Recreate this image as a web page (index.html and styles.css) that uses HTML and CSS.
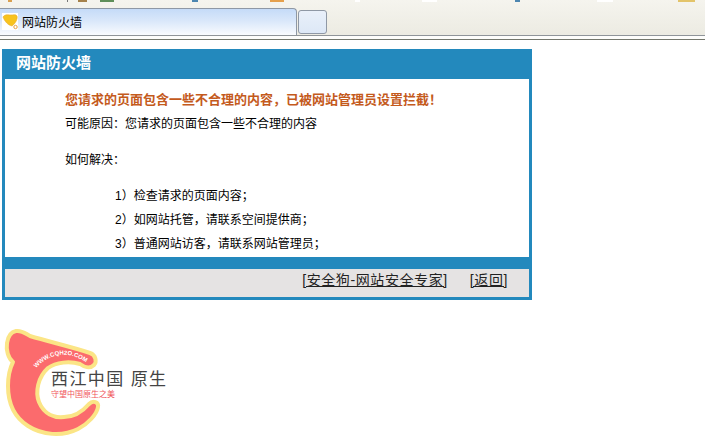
FILE: index.html
```html
<!DOCTYPE html>
<html lang="zh-CN">
<head>
    <meta charset="UTF-8">
    <title>网站防火墙</title>
    <link rel="stylesheet" href="styles.css">
</head>
<body>
    <div class="chrome">
        <svg class="toolbar-bits" width="705" height="2" viewBox="0 0 705 2">
            <rect x="8" width="4" height="2" fill="#d9a050"/>
            <rect x="67" width="1" height="2" fill="#777"/>
            <rect x="78" width="9" height="2" fill="#a5814a"/>
            <rect x="100" width="14" height="2" fill="#5f8f5a"/>
            <rect x="192" width="6" height="2" fill="#4d86b0"/>
            <rect x="270" width="14" height="2" fill="#e5a04c"/>
            <rect x="355" width="5" height="2" fill="#fff"/>
            <rect x="422" width="15" height="2" fill="#fff"/>
            <rect x="515" width="5" height="2" fill="#4d86b0"/>
            <rect x="597" width="16" height="2" fill="#fff"/>
            <rect x="678" width="17" height="2" fill="#e3c46a"/>
        </svg>
        <div class="tabbar">
            <div class="tab active">
                <svg class="tab-icon" width="16" height="17" viewBox="0 0 16 17">
                    <rect width="16" height="17" fill="#fff"/>
                    <path d="M1 4 C3 1 6 2 8 2 C11 2 14 1 15 3 C16 6 13 11 10 13 C6 12 3 9 1 4Z" fill="#f7c31f" stroke="#e9a92a" stroke-width=".6"/>
                    <circle cx="13.500" cy="14" r="1.700" fill="#fff" stroke="#e8a040"/>
                </svg>
                <span>网站防火墙</span>
            </div>
            <div class="tab blank"></div>
        </div>
    </div>

    <div class="panel">
        <div class="panel-title">网站防火墙</div>
        <div class="panel-body">
            <p class="warn">您请求的页面包含一些不合理的内容，已被网站管理员设置拦截！</p>
            <p class="line">可能原因：您请求的页面包含一些不合理的内容</p>
            <p class="line gap">如何解决：</p>
            <ul class="steps">
                <li>1）检查请求的页面内容；</li>
                <li>2）如网站托管，请联系空间提供商；</li>
                <li>3）普通网站访客，请联系网站管理员；</li>
            </ul>
        </div>
        <div class="panel-strip"></div>
        <div class="panel-foot">
            <a href="#">[安全狗-网站安全专家]</a>
            <a href="#">[返回]</a>
        </div>
    </div>

    <div class="logo">
        <svg width="170" height="116" viewBox="0 325 170 116">
            <path d="M16 331 C22 330 26 334 30 336 C50 342 72 347 90 353 C96 355 97 362 94 365 C90 369 84 367 80 364 C70 361 56 362 48 368 C38 377 35 392 39 402 C44 414 54 418 64 417 C74 417 83 411 89 404 C93 400 99 402 98 407 C97 414 88 424 78 429 C62 437 42 435 28 426 C14 417 8 402 8 386 C8 375 10 368 13 362 C8 358 6 350 7 343 C8 336 11 332 16 331Z" fill="#fb6b6d" stroke="#fbe586" stroke-width="4" stroke-linejoin="round"/>
            <path id="logo-arc" d="M36 368 Q60 343 90 365" fill="none"/>
            <text class="logo-url"><textPath href="#logo-arc">WWW.CQH2O.COM</textPath></text>
        </svg>
        <span class="logo-name">西江中国 原生</span>
        <span class="logo-sub">守望中国原生之美</span>
    </div>
</body>
</html>
```

FILE: styles.css
```css
body { margin: 0; background-color: #fff; font-family: "Liberation Sans", "Noto Sans CJK SC", sans-serif; font-size: 12px; color: #000; }

.chrome { position: relative; height: 40px; box-sizing: border-box; background-color: #fdfdfb; border-bottom: 1px solid #74776c; }
.toolbar-bits { position: absolute; left: 0; top: 0; }
.tabbar { display: flex; align-items: flex-end; gap: 1px; height: 36px; box-sizing: border-box; background: linear-gradient(#f5f4ee, #ecebe2); border-bottom: 1px solid #8f9499; }
.tab { box-sizing: border-box; border: 1px solid #8f98a5; }
.tab.active { display: flex; align-items: center; gap: 4px; width: 297px; height: 27px; padding: 0 0 2px 2px; border-left: 0; border-bottom: 0; border-radius: 0 4px 0 0; background: linear-gradient(#c5dbf8, #d9e7fa 45%, #f9fbfe); }
.tab.blank { width: 29px; height: 24px; margin-bottom: 1px; border-radius: 3px; background: linear-gradient(#e9f0fa, #dde8f6); }
.tab-icon { flex: none; }

.panel { width: 530px; box-sizing: border-box; margin: 9px 0 0 2px; border: 3px solid #2389bd; border-top: 0; }
.panel-title { height: 30px; line-height: 28px; padding-left: 11px; background-color: #2389bd; color: #fff; font-size: 15px; font-weight: bold; }
.panel-body { height: 178px; box-sizing: border-box; padding: 11px 0 0 60px; }
.panel-body p { margin: 0; }
.warn { color: #c45a1c; font-size: 13px; font-weight: bold; line-height: 19px; }
.line { line-height: 18px; margin-top: 6px !important; }
.gap { margin-top: 18px !important; }
.steps { list-style: none; margin: 18px 0 0; padding: 0 0 0 50px; }
.steps li { line-height: 18px; margin-bottom: 6px; }
.panel-strip { height: 12px; background-color: #2389bd; }
.panel-foot { height: 28px; display: flex; justify-content: flex-end; align-items: center; gap: 22px; padding: 0 21px 8px 0; box-sizing: border-box; background-color: #e5e3e3; font-size: 14px; letter-spacing: .6px; }
.panel-foot a { color: #222; text-decoration: underline; }

.logo { position: relative; width: 170px; height: 116px; margin-top: 25px; }
.logo svg { display: block; }
.logo-url { font-size: 6px; font-weight: bold; fill: #fff; }
.logo-name { position: absolute; left: 51px; top: 44px; font-size: 17px; line-height: 22px; letter-spacing: 1.4px; color: #444; white-space: nowrap; }
.logo-sub { position: absolute; left: 51px; top: 65px; font-size: 8px; line-height: 9px; color: #f0555a; white-space: nowrap; }
```
